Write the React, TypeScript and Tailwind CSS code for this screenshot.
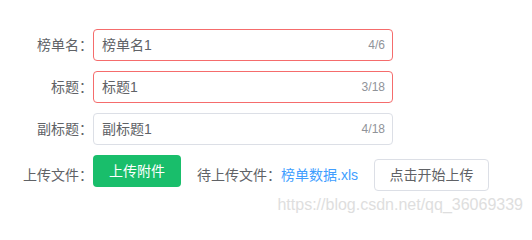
import React from "react";

type Field = {
  label: string;
  value: string;
  max: number;
  error?: boolean;
};

const fields: Field[] = [
  { label: "榜单名：", value: "榜单名1", max: 6, error: true },
  { label: "标题：", value: "标题1", max: 18, error: true },
  { label: "副标题：", value: "副标题1", max: 18 },
];

export default function App() {
  return (
    <div className="relative w-[532px] h-[226px] bg-white pt-[29px] font-['Liberation_Sans','Noto_Sans_CJK_SC',sans-serif] text-[14px] text-[#606266]">
      <div className="flex flex-col gap-[10px]">
        {fields.map((f) => (
          <div key={f.label} className="flex items-center">
            <label className="w-[93px] text-right leading-[32px]">{f.label}</label>
            <div
              className={
                f.error
                  ? "flex items-center justify-between w-[300px] h-[32px] border border-[#f56c6c] rounded-[4px] pl-[8px] pr-[7px]"
                  : "flex items-center justify-between w-[300px] h-[32px] border border-[#dcdfe6] rounded-[4px] pl-[8px] pr-[7px]"
              }
            >
              <span>{f.value}</span>
              <span className="text-[12px] text-[#909399]">
                {f.value.length}/{f.max}
              </span>
            </div>
          </div>
        ))}

        {/* 上传文件 */}
        <div className="flex items-center h-[40px]">
          <label className="w-[93px] text-right">上传文件：</label>
          <button className="self-start w-[88px] h-[32px] rounded-[4px] bg-[#19be6b] text-white text-[14px]">
            上传附件
          </button>
          <span className="ml-[16px]">待上传文件：</span>
          <span className="text-[#409eff]">榜单数据.xls</span>
          <button className="ml-[16px] w-[115px] h-[32px] rounded-[4px] border border-[#dcdfe6] bg-white text-[#606266] text-[14px]">
            点击开始上传
          </button>
        </div>
      </div>

      {/* watermark */}
      <div className="absolute right-[9px] top-[196px] text-[16px] leading-[18px] text-[#dedede] font-['Liberation_Sans',sans-serif]">
        https://blog.csdn.net/qq_36069339
      </div>
    </div>
  );
}
